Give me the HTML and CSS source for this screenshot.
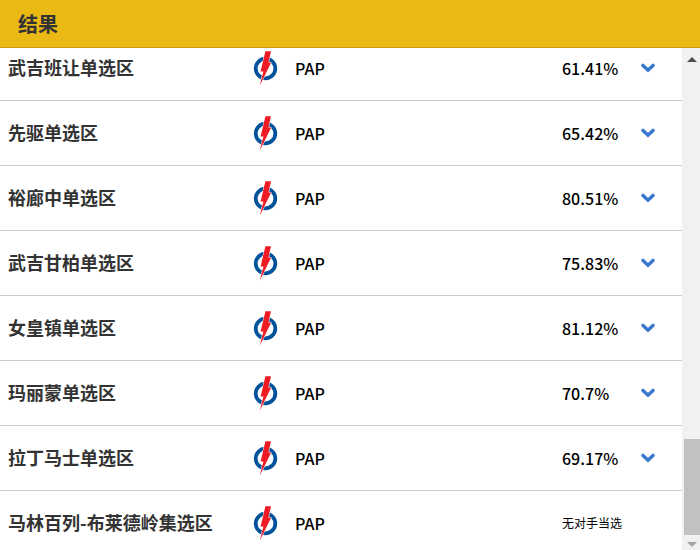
FILE: index.html
```html
<!DOCTYPE html>
<html lang="zh-Hans">
<head>
    <meta charset="UTF-8">
    <title>结果</title>
    <meta name="viewport" content="width=device-width, initial-scale=1">
    <link rel="stylesheet" href="styles.css">
</head>
<body>
<svg class="sprite" aria-hidden="true">
    <symbol id="logo_pap" viewBox="0 0 26 36">
        <circle cx="12.5" cy="18.5" r="9.8" fill="#fff" stroke="#00529b" stroke-width="3.8"/>
        <path d="M12.4 1.2H18L15.4 12.6H18.2L6.8 35.6L10.4 21.6H7.6Z" fill="#ed1c24" stroke="#fff" stroke-width="1" paint-order="stroke"/>
    </symbol>
    <symbol id="icon_down" viewBox="0 0 14 10">
        <path d="M2 2.4L7 7.2L12 2.4" fill="none" stroke="#3a78cf" stroke-width="3.4" stroke-linecap="round"/>
    </symbol>
</svg>
<div id="app">
    <header class="header">
        <h1>结果</h1>
    </header>
    <main class="panel">
        <div class="panel-content">
            <table class="results">
                <colgroup>
                    <col class="col-name">
                    <col class="col-logo">
                    <col>
                    <col class="col-vote">
                    <col class="col-toggle">
                </colgroup>
                <tbody>
                <tr>
                    <th scope="row">武吉班让单选区</th>
                    <td><svg class="logo"><use href="#logo_pap"/></svg></td>
                    <td>PAP</td>
                    <td>61.41%</td>
                    <td><button type="button" class="toggle" aria-label="展开"><svg class="icon"><use href="#icon_down"/></svg></button></td>
                </tr>
                <tr>
                    <th scope="row">先驱单选区</th>
                    <td><svg class="logo"><use href="#logo_pap"/></svg></td>
                    <td>PAP</td>
                    <td>65.42%</td>
                    <td><button type="button" class="toggle" aria-label="展开"><svg class="icon"><use href="#icon_down"/></svg></button></td>
                </tr>
                <tr>
                    <th scope="row">裕廊中单选区</th>
                    <td><svg class="logo"><use href="#logo_pap"/></svg></td>
                    <td>PAP</td>
                    <td>80.51%</td>
                    <td><button type="button" class="toggle" aria-label="展开"><svg class="icon"><use href="#icon_down"/></svg></button></td>
                </tr>
                <tr>
                    <th scope="row">武吉甘柏单选区</th>
                    <td><svg class="logo"><use href="#logo_pap"/></svg></td>
                    <td>PAP</td>
                    <td>75.83%</td>
                    <td><button type="button" class="toggle" aria-label="展开"><svg class="icon"><use href="#icon_down"/></svg></button></td>
                </tr>
                <tr>
                    <th scope="row">女皇镇单选区</th>
                    <td><svg class="logo"><use href="#logo_pap"/></svg></td>
                    <td>PAP</td>
                    <td>81.12%</td>
                    <td><button type="button" class="toggle" aria-label="展开"><svg class="icon"><use href="#icon_down"/></svg></button></td>
                </tr>
                <tr>
                    <th scope="row">玛丽蒙单选区</th>
                    <td><svg class="logo"><use href="#logo_pap"/></svg></td>
                    <td>PAP</td>
                    <td>70.7%</td>
                    <td><button type="button" class="toggle" aria-label="展开"><svg class="icon"><use href="#icon_down"/></svg></button></td>
                </tr>
                <tr>
                    <th scope="row">拉丁马士单选区</th>
                    <td><svg class="logo"><use href="#logo_pap"/></svg></td>
                    <td>PAP</td>
                    <td>69.17%</td>
                    <td><button type="button" class="toggle" aria-label="展开"><svg class="icon"><use href="#icon_down"/></svg></button></td>
                </tr>
                <tr>
                    <th scope="row">马林百列-布莱德岭集选区</th>
                    <td><svg class="logo"><use href="#logo_pap"/></svg></td>
                    <td>PAP</td>
                    <td class="walkover" colspan="2">无对手当选</td>
                </tr>
                </tbody>
            </table>
        </div>
        <div class="scrollbar" aria-hidden="true">
            <svg class="arrow" viewBox="0 0 10 5"><path d="M0 5L5 0L10 5Z" fill="#505050"/></svg>
            <div class="thumb"></div>
            <svg class="arrow" viewBox="0 0 10 5"><path d="M0 0L5 5L10 0Z" fill="#a3a3a3"/></svg>
        </div>
    </main>
</div>
</body>
</html>
```

FILE: styles.css
```css
* {
    box-sizing: border-box;
    margin: 0;
    padding: 0;
}

body {
    font-family: "Noto Sans CJK SC", sans-serif;
    font-size: 16px;
    line-height: 24px;
    color: #000;
    background: #fff;
}

.sprite {
    display: none;
}

#app {
    display: flex;
    flex-direction: column;
    height: 100vh;
    overflow: hidden;
}

.header {
    flex: none;
    padding: 8px 18px;
    background: #eab913;
    border-bottom: 1px solid #c99a0c;
}

.header h1 {
    font-size: 20px;
    line-height: 31px;
    color: #333;
}

.panel {
    display: flex;
    flex: 1;
    min-height: 0;
}

.panel-content {
    flex: 1;
    min-width: 0;
    overflow: hidden;
}

/* list is scrolled, first row is partly under the header */
.results {
    width: 100%;
    margin-top: -12px;
    table-layout: fixed;
    border-spacing: 0;
}

.col-name {
    width: 253px;
}

.col-logo {
    width: 42px;
}

.col-vote {
    width: 79px;
}

.col-toggle {
    width: 41px;
}

.results th,
.results td {
    height: 65px;
    border-bottom: 1px solid #ccc;
    text-align: left;
    vertical-align: middle;
    font-weight: 500;
}

.results th {
    padding: 0 0 2px 8px;
    font-size: 18px;
    font-weight: 700;
    color: #333;
}

.results .walkover {
    font-size: 12px;
    font-weight: 400;
}

.logo {
    display: block;
    width: 26px;
    height: 36px;
}

.toggle {
    display: block;
    border: none;
    background: none;
    cursor: pointer;
}

.icon {
    display: block;
    width: 14px;
    height: 10px;
}

.scrollbar {
    display: flex;
    flex: none;
    flex-direction: column;
    align-items: center;
    width: 18px;
    padding: 9px 0 3px 2px;
    background: #f1f1f1;
}

.arrow {
    width: 10px;
    height: 5px;
}

.thumb {
    width: 100%;
    height: 96px;
    margin: auto 0 7px;
    background: #c1c1c1;
}
```
